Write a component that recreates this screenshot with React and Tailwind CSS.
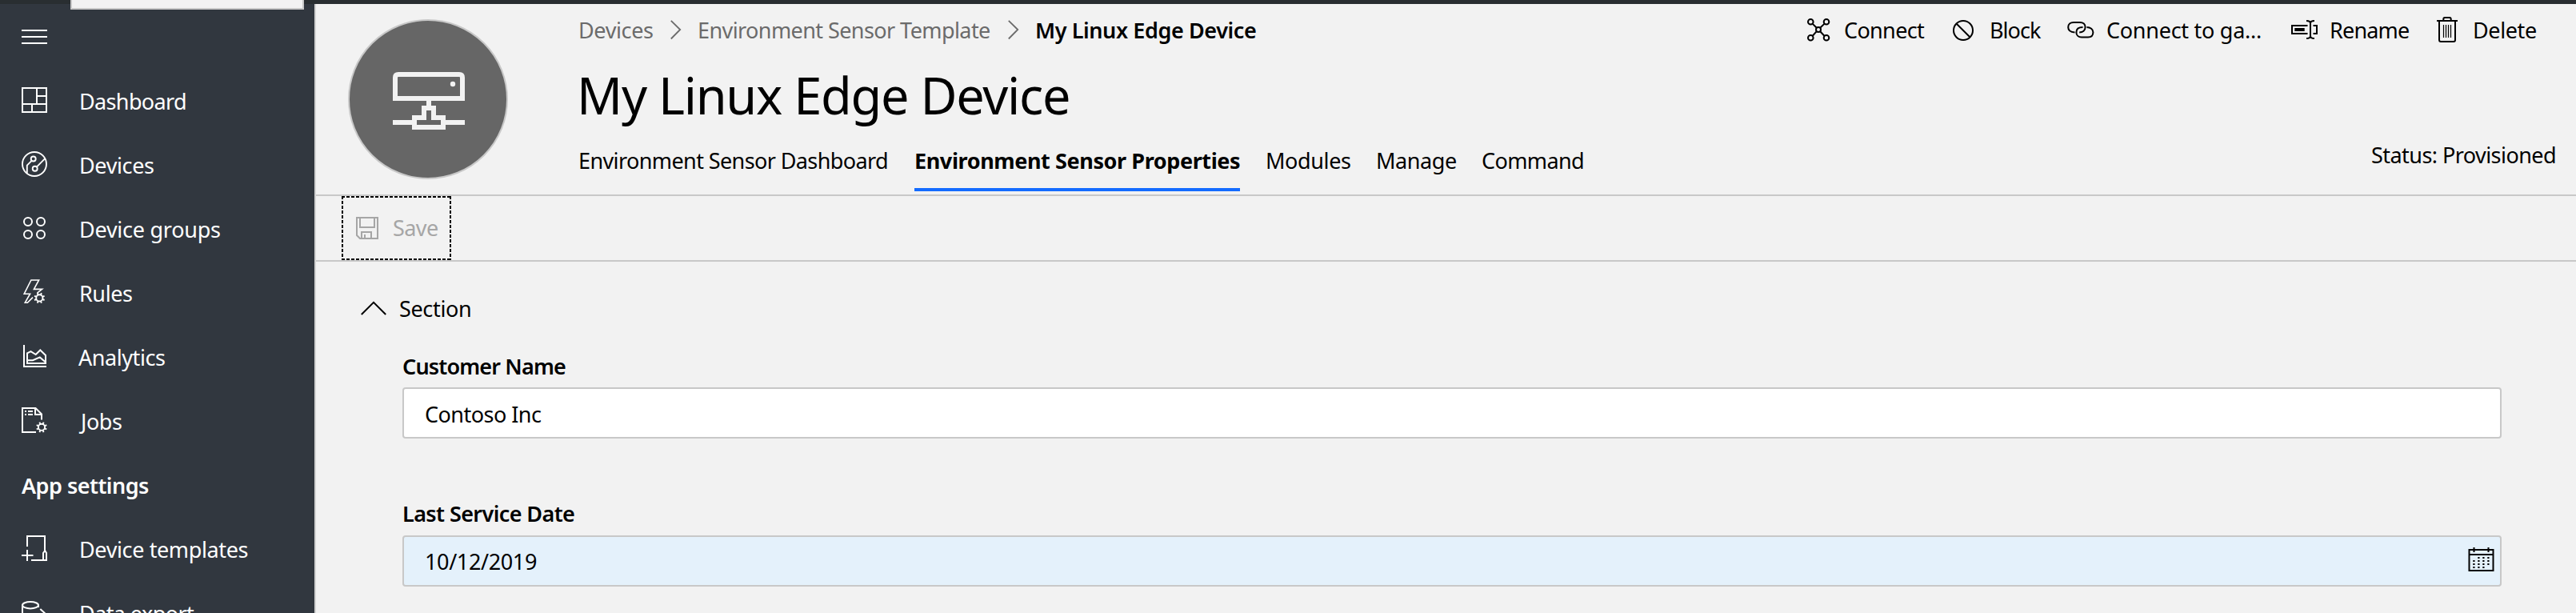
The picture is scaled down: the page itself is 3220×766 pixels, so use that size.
function Icon({ w = 32, h = 32, sw = 2, className = "", children }) {
  return (
    <svg width={w} height={h} viewBox={`0 0 ${w} ${h}`} fill="none" stroke="currentColor" strokeWidth={sw} className={`shrink-0 overflow-visible ${className}`}>
      {children}
    </svg>
  );
}

function Gear({ x, y }) {
  return (
    <g transform={`translate(${x} ${y})`}>
      <circle r="4.1" strokeWidth="1.9" />
      {[22.5, 67.5, 112.5, 157.5, 202.5, 247.5, 292.5, 337.5].map((a) => (
        <path key={a} d="M0 -4.6V-6.8" strokeWidth="1.9" transform={`rotate(${a})`} />
      ))}
    </g>
  );
}

const icons = {
  dashboard: <path d="M1 1H31V31H1ZM19 1V21M19 11H31M1 21H31M13 21V31" />,
  devices: (
    <g strokeWidth="1.9">
      <circle cx="16" cy="16" r="15" />
      <circle cx="14.7" cy="9.5" r="3" />
      <path d="M12.6 11.8L6.8 17.6V27.6M18.8 19.6L29 9.4" />
      <circle cx="16.7" cy="21.7" r="3" />
    </g>
  ),
  groups: (
    <g>
      <circle cx="8" cy="8" r="5" />
      <circle cx="24" cy="8" r="5" />
      <circle cx="8" cy="24" r="5" />
      <circle cx="24" cy="24" r="5" />
    </g>
  ),
  rules: (
    <g>
      <path strokeWidth="1.6" d="M19.5 17.2L25.6 12.4H15.4L21.6 1H11.9L3.2 18.2H10.6L4.3 29.2H7.4L14 22.6" />
      <Gear x="22.3" y="23.4" />
    </g>
  ),
  analytics: (
    <g>
      <path d="M3 2V29H31" />
      <path d="M7 12.4L11.5 10.2L17.7 14L23.3 8.5L30 15V25H7ZM7 21.2H14L22.8 17.4L29.6 23.2" />
    </g>
  ),
  jobs: (
    <g>
      <path d="M18 31H1V1H17.5L25 8.5V15.5M17 1V9H25" />
      <path d="M4 5H6M8 5H14M4 9H6M8 9H14" />
      <Gear x="25" y="24.8" />
    </g>
  ),
  templates: (
    <g>
      <path d="M7 14V1H29V19.5M12 31H31V22L29.2 19L27 22V31" />
      <path d="M0 25H14.5M7 18V32" />
    </g>
  ),
  exportData: (
    <g>
      <ellipse cx="11" cy="7.2" rx="10" ry="4.2" />
      <path d="M1 7V30M21 7V10M23.3 12L32 20" />
    </g>
  ),
};

const nav = [
  ["dashboard", "Dashboard", "tracking-[-0.65px]"],
  ["devices", "Devices", "tracking-[-0.38px]"],
  ["groups", "Device groups", "tracking-[-0.26px]"],
  ["rules", "Rules", "tracking-[-0.42px]"],
  ["analytics", "Analytics", "tracking-[-0.44px] -ml-[1px]"],
  ["jobs", "Jobs", "tracking-[-0.44px] ml-[2px]"],
  [null, "App settings", "tracking-[-0.52px] font-semibold"],
  ["templates", "Device templates", "tracking-[-0.38px]"],
  ["exportData", "Data export", "tracking-[-0.58px]"],
];

function Sidebar() {
  return (
    <nav className="w-[393px] shrink-0 bg-[#31373f] text-white">
      <div className="h-20 pl-[27px] pt-[25px]">
        <Icon>
          <path d="M0 8H32M0 16H32M0 24H32" />
        </Icon>
      </div>
      {nav.map(([icon, label, cls]) => (
        <div key={label} className="flex h-20 pl-[27px] pt-6">
          {icon && <Icon className="mr-10">{icons[icon]}</Icon>}
          <span className={`mt-[-1px] ${cls}`}>{label}</span>
        </div>
      ))}
    </nav>
  );
}

function Crumb() {
  return (
    <Icon w={13} h={24} sw={1.8} className="mx-[21px] mt-[6px] text-[#6b6b6b]">
      <path d="M0.8 0.8L12.2 12L0.8 23.5" />
    </Icon>
  );
}

function Avatar() {
  return (
    <div className="ml-10 mt-[19px] flex h-[200px] w-[200px] shrink-0 rounded-full border-2 border-[#c8c8c8] bg-[#666666] pl-[54px] pt-[64px] text-[#f2f2f2]">
      <Icon w={90} h={72} sw={6}>
        <path d="M3 33V7Q3 3 7 3H83Q87 3 87 7V33Z" />
        <circle cx="75" cy="15" r="3.2" fill="currentColor" stroke="none" />
        <path d="M45 36V44M0 63H27M63 63H90" />
        <path d="M27 69V57H39V45H51V57H63V69Z" />
      </Icon>
    </div>
  );
}

function Action({ icon, label, cls, text }) {
  return (
    <div className={`flex shrink-0 ${cls}`}>
      <Icon className="mt-[2px] mr-4">{icon}</Icon>
      <span className={text}>{label}</span>
    </div>
  );
}

function Actions() {
  return (
    <div className="flex">
      <Action cls="w-[181px]" label="Connect" text="tracking-[-0.66px]" icon={
        <g>
          <path d="M8.6 8.6L13.8 13.8M23.6 8.6L18.2 13.8M8.6 24L13.8 18.2M23.6 24L18.2 18.2" />
          <circle cx="16" cy="16" r="3" />
          <circle cx="6.3" cy="6.3" r="3.3" />
          <circle cx="26" cy="6.3" r="3.3" />
          <circle cx="6.3" cy="26.3" r="3.3" />
          <circle cx="26" cy="26.3" r="3.3" />
        </g>
      } />
      <Action cls="w-[146px]" label="Block" text="ml-[1px] tracking-[-0.95px]" icon={
        <g>
          <circle cx="16" cy="17" r="12" />
          <path d="M7.5 8.5L24.5 25.5" />
        </g>
      } />
      <Action cls="w-[280px]" label="Connect to ga..." text="ml-[1px] tracking-[-0.27px]" icon={
        <g>
          <path d="M9.5 19.4C4 19.2 1.2 16.4 1.2 13C1.2 9.2 4 6.9 8 6.9H16C20 6.9 22.6 9.4 22.6 13C22.6 16.8 19.5 19.4 15.2 19.4" />
          <path d="M19.5 13C14 13 11.4 15.6 11.4 19.4C11.4 23 14 25.5 18 25.5H26C30 25.5 32.4 23 32.4 19.3C32.4 15.6 29 13 24.5 13" />
        </g>
      } />
      <Action cls="w-[179px]" label="Rename" text="tracking-[-0.82px]" icon={
        <g>
          <path d="M20.5 11H1V21H20.5M27.5 11H32V21H27.5" />
          <path d="M4.3 16H16.7" strokeWidth="4" />
          <path d="M19 5C22 5 24 5.5 24 8C24 5.5 26 5 29 5M24 7V25M19 27C22 27 24 26.5 24 24C24 26.5 26 27 29 27" />
        </g>
      } />
      <Action cls="w-[177px]" label="Delete" text="tracking-[-0.38px]" icon={
        <g>
          <path d="M3 5H29M11.3 5V3Q11.3 1 13 1H19Q20.7 1 20.7 3V5M6 5V29Q6 31 8 31H24Q26 31 26 29V5" />
          <path d="M11.5 10V26M14.5 10V26M17.5 10V26M20.5 10V26" strokeWidth="1.2" />
        </g>
      } />
    </div>
  );
}

function Header() {
  return (
    <header className="flex h-[240px] border-b-2 border-[#c8c8c8]">
      <Avatar />
      <div className="ml-[88px] mt-[14px] flex-1">
        <div className="flex text-[#6b6b6b]">
          <span className="w-[94px] tracking-[-0.38px]">Devices</span>
          <Crumb />
          <span className="w-[367px] tracking-[-0.58px]">Environment Sensor Template</span>
          <Crumb />
          <span className="font-semibold tracking-[-0.4px] text-black">My Linux Edge Device</span>
        </div>
        <h1 className="mt-5 -ml-[2px] text-[63px] leading-[85px] tracking-[-1.25px]">My Linux Edge Device</h1>
        <div className="mt-[21px] flex gap-8">
          <span className="w-[388px] tracking-[-0.6px]">Environment Sensor Dashboard</span>
          <span className="w-[407px] border-b-4 border-[#136bff] pb-4 font-bold tracking-[-0.4px]">Environment Sensor Properties</span>
          <span className="w-[106px] tracking-[-0.38px]">Modules</span>
          <span className="w-[100px] tracking-[-0.41px]">Manage</span>
          <span className="tracking-[-0.62px]">Command</span>
        </div>
      </div>
      <div className="mt-[14px] w-[963px] shrink-0">
        <Actions />
        <div className="ml-auto mt-[119px] w-[256px] tracking-[-0.55px]">Status: Provisioned</div>
      </div>
    </header>
  );
}

function Calendar() {
  const dots = [[1, 0], [2, 0], [3, 0], [0, 1], [1, 1], [2, 1], [3, 1], [0, 2], [1, 2], [2, 2], [3, 2], [0, 3], [1, 3], [2, 3]];
  return (
    <Icon w={33} h={32} className="mt-[12px]">
      <path d="M1.5 4H31.5V30H1.5ZM1.5 10H31.5M7.5 1V7M25.5 1V7" />
      {dots.map(([c, r]) => (
        <path key={`${c}${r}`} d={`M${6.3 + c * 6} ${14 + r * 4}h2.2`} />
      ))}
    </Icon>
  );
}

export default function App() {
  return (
    <div className="relative flex h-[766px] w-[3220px] flex-col overflow-hidden whitespace-nowrap bg-[#f2f2f2] font-['Noto_Sans',sans-serif] text-[27px] leading-[37px] text-black">
      <div className="h-[5px] shrink-0 bg-[#292e31]" />
      <div className="absolute left-[88px] top-0 h-3 w-[292px] border-2 border-t-0 border-[#c8c8c8] bg-[#f2f2f2]" />
      <div className="flex min-h-0 flex-1">
        <Sidebar />
        <main className="flex-1 border-l-2 border-[#d2d2d2]">
          <Header />
          <div className="flex h-[82px] border-b-2 border-[#c8c8c8] pl-8">
            <button className="relative flex h-20 w-[137px] pl-[18px] text-[#a6a6a6]">
              <svg width="137" height="80" className="absolute left-0 top-0" fill="none" stroke="#000" strokeWidth="2" strokeDasharray="4 2">
                <path d="M0 1H137M0 79H137M1 0V80M136 0V80" />
              </svg>
              <Icon w={28} h={28} className="mt-[26px]">
                <path d="M1 1H27V27H5L1 23ZM5 1V13H23V1M7 27V19H19V27M11 27V22" />
              </Icon>
              <span className="ml-[18px] mt-[21px] tracking-[-0.56px]">Save</span>
            </button>
          </div>
          <section className="pl-[56px] pt-10">
            <div className="flex">
              <Icon w={32} h={18} className="mt-[9px]">
                <path d="M0.8 17L16 1.8L31.2 17" />
              </Icon>
              <span className="ml-4 tracking-[-0.34px]">Section</span>
            </div>
            <div className="ml-[52px] mt-[35px] w-[2624px]">
              <div className="font-semibold tracking-[-0.83px]">Customer Name</div>
              <div className="mt-2 h-16 rounded-[4px] border-2 border-[#c8c8c8] bg-white pl-[26px] pt-[13px] tracking-[-0.53px]">Contoso Inc</div>
              <div className="mt-[75px] font-semibold tracking-[-0.59px]">Last Service Date</div>
              <div className="mt-[9px] flex h-16 justify-between rounded-[4px] border-2 border-[#c8c8c8] bg-[#e4f1fb] pl-[26px] pr-[7px]">
                <span className="pt-3 tracking-[-0.36px]">10/12/2019</span>
                <Calendar />
              </div>
            </div>
          </section>
        </main>
      </div>
    </div>
  );
}
